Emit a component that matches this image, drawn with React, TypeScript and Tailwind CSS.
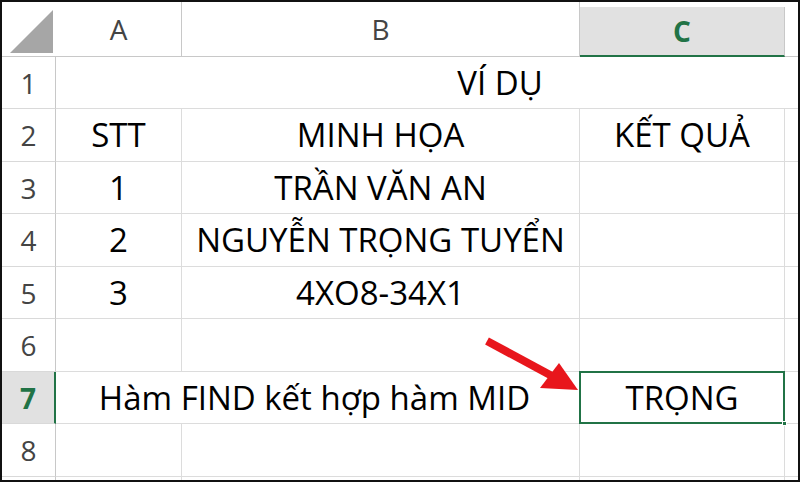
const HEAD = '"Open Sans", "Noto Sans", sans-serif';
const CELL = '"Open Sans", "Noto Sans", sans-serif';

const ROWS = [
  { h: 'h-[52px]', cells: ['', '', ''] },
  { h: 'h-[53px]', cells: ['STT', 'MINH HỌA', 'KẾT QUẢ'] },
  { h: 'h-[52px]', cells: ['1', 'TRẦN VĂN AN', ''] },
  { h: 'h-[53px]', cells: ['2', 'NGUYỄN TRỌNG TUYỂN', ''] },
  { h: 'h-[52px]', cells: ['3', '4XO8-34X1', ''] },
  { h: 'h-[53px]', cells: ['', '', ''] },
  { h: 'h-[52px]', cells: ['', '', ''] },
  { h: 'h-[53px]', cells: ['', '', ''] },
];

function Corner() {
  return (
    <div className="w-[54px] h-[55px] border-b border-[#c8c8c8] relative">
      <svg width="54" height="55" className="absolute left-0 top-0">
        <polygon points="8,51 51,51 51,8" fill="#a6a6a6" />
      </svg>
    </div>
  );
}

function Arrow() {
  return (
    <svg width="800" height="482" className="absolute left-0 top-0 pointer-events-none">
      <line x1="485" y1="339" x2="550" y2="374" stroke="#e8161c" strokeWidth="8" />
      <polygon points="557,361 576,388 538,386" fill="#e8161c" />
    </svg>
  );
}

export default function App() {
  return (
    <div className="w-[800px] h-[482px] bg-white border-2 border-[#111] box-border overflow-hidden relative">
      {/* column headers */}
      <div className="flex" style={{ fontFamily: HEAD }}>
        <Corner />
        <div className="w-[126px] h-[55px] border-b border-r border-[#c8c8c8] flex items-center justify-center text-[28px] text-[#444]">A</div>
        <div className="w-[398px] h-[55px] border-b border-r border-[#c8c8c8] flex items-center justify-center text-[28px] text-[#444]">B</div>
        <div className="w-[205px] h-[55px] flex flex-col">
          <div className="h-[5px] bg-white border-b-0" />
          <div className="flex-1 bg-[#e1e1e1] border-b-2 border-[#217346] border-r border-r-[#c8c8c8] flex items-center justify-center text-[28px] font-bold text-[#217346]">C</div>
        </div>
        <div className="flex-1 h-[55px] border-b border-[#c8c8c8]" />
      </div>

      {/* body rows */}
      {ROWS.map((row, i) => {
        const n = i + 1;
        const sel = n === 7;
        return (
          <div key={n} className={`flex ${row.h}`}>
            <div
              className={`w-[54px] h-full flex items-center justify-center text-[28px] border-b border-[#d9d9d9] ${sel ? 'bg-[#e1e1e1] border-r-2 border-r-[#217346] text-[#217346] font-bold' : 'border-r border-r-[#c8c8c8] text-[#444]'}`}
              style={{ fontFamily: HEAD }}
            >
              {n}
            </div>
            {n === 1 ? (
              <div className="flex-1 h-full border-b border-[#dcdcdc] flex items-center justify-center pl-[146px] text-[33px] text-black" style={{ fontFamily: CELL }}>
                VÍ DỤ
              </div>
            ) : n === 7 ? (
              <>
                <div className="w-[524px] h-full border-b border-r border-[#dcdcdc] flex items-center justify-center text-[33px] text-black pr-[6px]" style={{ fontFamily: CELL }}>
                  Hàm FIND kết hợp hàm MID
                </div>
                <div className="w-[205px] h-full relative border-b border-r border-[#dcdcdc]">
                  <div className="absolute left-[-1px] top-[-1px] w-[206px] h-[53px] border-2 border-[#217346] flex items-center justify-center text-[33px] text-black" style={{ fontFamily: CELL }}>
                    TRỌNG
                  </div>
                  <div className="absolute right-[-3px] bottom-[-3px] w-[5px] h-[5px] bg-[#217346] border border-white" />
                </div>
                <div className="flex-1 h-full border-b border-[#dcdcdc]" />
              </>
            ) : (
              <>
                {row.cells.map((c, j) => (
                  <div
                    key={j}
                    className={`${j === 0 ? 'w-[126px]' : j === 1 ? 'w-[398px]' : 'w-[205px]'} h-full border-b border-r border-[#dcdcdc] flex items-center justify-center text-[33px] text-black whitespace-nowrap`}
                    style={{ fontFamily: CELL }}
                  >
                    {c}
                  </div>
                ))}
                <div className="flex-1 h-full border-b border-[#dcdcdc]" />
              </>
            )}
          </div>
        );
      })}
      <div className="flex h-[10px]">
        <div className="w-[54px] border-r border-[#c8c8c8]" />
        <div className="w-[126px] border-r border-[#dcdcdc]" />
        <div className="w-[398px] border-r border-[#dcdcdc]" />
        <div className="w-[205px] border-r border-[#dcdcdc]" />
      </div>
      <Arrow />
    </div>
  );
}
